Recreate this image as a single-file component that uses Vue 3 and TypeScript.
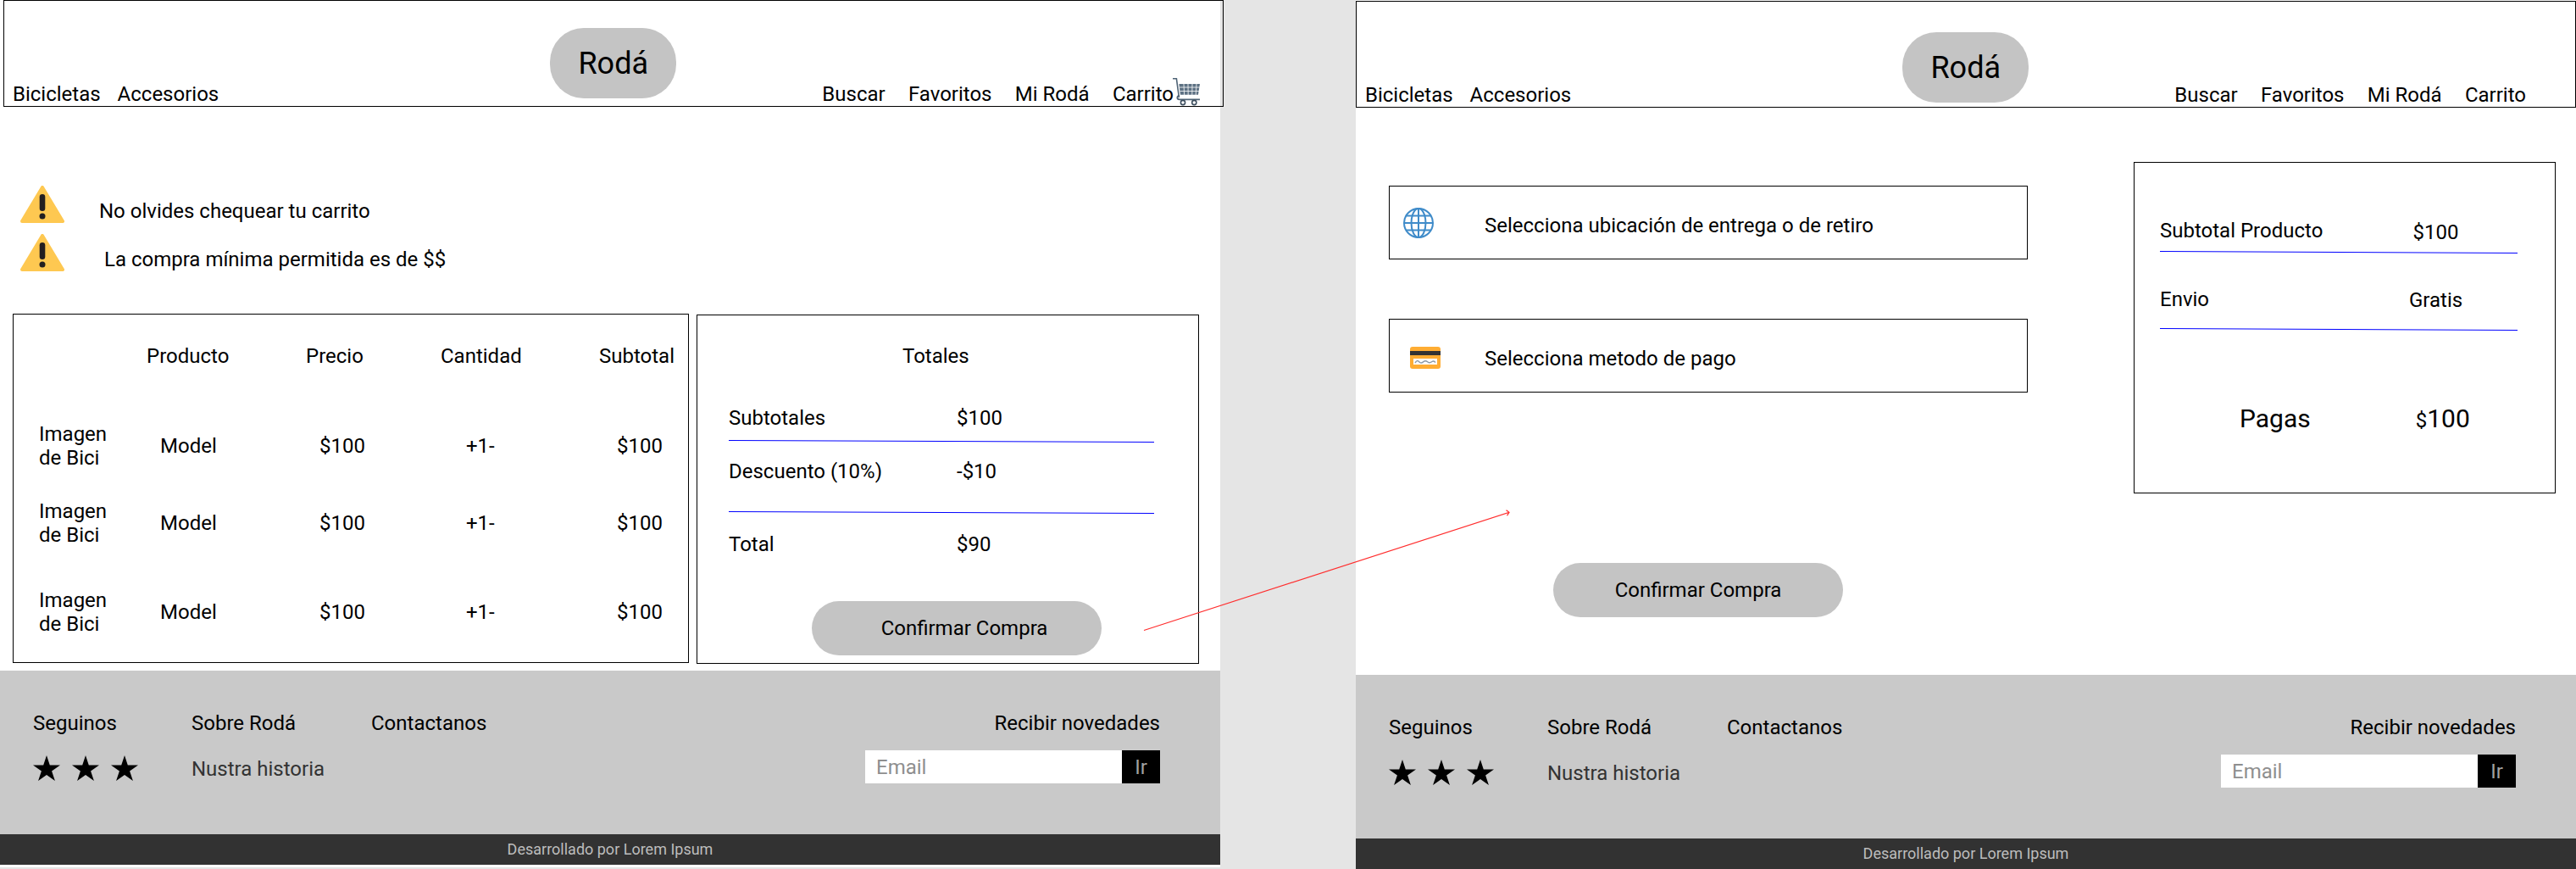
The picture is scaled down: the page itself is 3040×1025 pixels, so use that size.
<script setup lang="ts">
import { ref } from 'vue'

type FrameId = 'cart' | 'checkout'

const frames: FrameId[] = ['cart', 'checkout']
const navLeft = ['Bicicletas', 'Accesorios']
const navRight = ['Buscar', 'Favoritos', 'Mi Rodá', 'Carrito']
const headers = ['Producto', 'Precio', 'Cantidad', 'Subtotal']
const alerts = ['No olvides chequear tu carrito', 'La compra mínima permitida es de $$']
const products = ref([
  { name: 'Model', price: '$100', qty: '+1-', subtotal: '$100' },
  { name: 'Model', price: '$100', qty: '+1-', subtotal: '$100' },
  { name: 'Model', price: '$100', qty: '+1-', subtotal: '$100' },
])
const email = ref('')
const starPoints = '16,0 19.8,11.5 32,11.5 22.1,18.6 25.9,30 16,22.9 6.1,30 9.9,18.6 0,11.5 12.2,11.5'
</script>

<template>
  <div class="page">
    <section v-for="frame in frames" :key="frame" class="frame" :class="`frame--${frame}`">
      <header class="topbar">
        <nav class="nav">
          <a v-for="item in navLeft" :key="item">{{ item }}</a>
        </nav>
        <div class="logo">Rodá</div>
        <nav class="nav nav--right">
          <a v-for="item in navRight" :key="item">{{ item }}</a>
        </nav>
        <svg v-if="frame === 'cart'" class="cart-icon" width="32" height="33" viewBox="0 0 32 33">
          <path d="M0 .8h4.4L7.4 23" fill="none" stroke="#4f6476" stroke-width="1.6" />
          <path d="M7.4 7H32l-2 12.8H9z" fill="#5d7183" />
          <path d="M8 11h24M8.500 15.500h23M13 7l.6 13M18 7l.2 13M23 7l-.2 13M28 7l-.8 13" stroke="#fff" stroke-width=".8" />
          <path d="M8 20.500c-3.500 1-3.500 4.500 0 4.800h24" fill="none" stroke="#4f6476" stroke-width="1.800" />
          <circle cx="12" cy="29" r="2.600" fill="#fff" stroke="#3f5060" stroke-width="1.600" />
          <circle cx="25.300" cy="29" r="2.600" fill="#fff" stroke="#3f5060" stroke-width="1.600" />
        </svg>
      </header>

      <main v-if="frame === 'cart'" class="content">
        <div class="alerts">
          <div v-for="(alert, i) in alerts" :key="alert" class="alert">
            <svg width="52" height="44" viewBox="0 0 52 44">
              <polygon points="26,2 50,42 2,42" fill="#fec851" stroke="#fec851" stroke-width="4" stroke-linejoin="round" />
              <rect x="22.700" y="10" width="6.600" height="20" rx="3.300" fill="#231f20" />
              <circle cx="26" cy="36" r="3.500" fill="#231f20" />
            </svg>
            <span class="alert-text" :class="{ 'alert-text--wide': i === 1 }">{{ alert }}</span>
          </div>
        </div>

        <div class="cart-row">
          <div class="products">
            <div class="products-head">
              <span v-for="h in headers" :key="h">{{ h }}</span>
            </div>
            <div v-for="(p, i) in products" :key="i" class="product">
              <span class="thumb">Imagen<br />de Bici</span>
              <span>{{ p.name }}</span>
              <span>{{ p.price }}</span>
              <span>{{ p.qty }}</span>
              <span>{{ p.subtotal }}</span>
            </div>
          </div>

          <aside class="totals">
            <h2 class="totals-title">Totales</h2>
            <div class="totals-row totals-row--first"><span>Subtotales</span><span>$100</span></div>
            <svg class="rule rule--first" width="502" height="3" viewBox="0 0 502 3"><line x1="0" y1=".5" x2="502" y2="2.500" /></svg>
            <div class="totals-row totals-row--discount"><span>Descuento (10%)</span><span>-$10</span></div>
            <svg class="rule rule--second" width="502" height="3" viewBox="0 0 502 3"><line x1="0" y1=".5" x2="502" y2="2.500" /></svg>
            <div class="totals-row totals-row--total"><span>Total</span><span>$90</span></div>
            <button class="confirm confirm--totals" type="button">Confirmar Compra</button>
          </aside>
        </div>
      </main>

      <main v-else class="content content--checkout">
        <div class="steps">
          <div class="step">
            <svg class="globe" width="36" height="36" viewBox="0 0 36 36" fill="none" stroke="#3f8bc9" stroke-width="2">
              <circle cx="18" cy="18" r="17" />
              <ellipse cx="18" cy="18" rx="8.500" ry="17" />
              <path d="M18 1v34M1 18h34M4 9.500h28M4 26.500h28" />
            </svg>
            <span class="step-text">Selecciona ubicación de entrega o de retiro</span>
          </div>
          <div class="step step--pay">
            <svg class="credit" width="36" height="26" viewBox="0 0 36 26">
              <rect width="36" height="26" rx="3" fill="#ffad33" />
              <rect y="5" width="36" height="5" fill="#333" />
              <rect x="4" y="14" width="28" height="7" fill="#fff" />
              <path d="M6 19c2-3 3-3 5-1s3 1 5-.5 3-1 5 .5 3 1 5-.5 3 0 4 1" fill="none" stroke="#8c99a5" stroke-width="1.500" />
            </svg>
            <span class="step-text">Selecciona metodo de pago</span>
          </div>
          <button class="confirm confirm--steps" type="button">Confirmar Compra</button>
        </div>

        <aside class="summary">
          <div class="summary-row"><span>Subtotal Producto</span><span class="summary-value summary-value--low">$100</span></div>
          <svg class="rule rule--summary" width="422" height="3" viewBox="0 0 422 3"><line x1="0" y1=".5" x2="422" y2="2.500" /></svg>
          <div class="summary-row summary-row--ship"><span>Envio</span><span class="summary-value">Gratis</span></div>
          <svg class="rule rule--ship" width="422" height="3" viewBox="0 0 422 3"><line x1="0" y1=".5" x2="422" y2="2.500" /></svg>
          <div class="pay-row">
            <span>Pagas</span>
            <span><small>$</small>100</span>
          </div>
        </aside>
      </main>

      <footer class="footer">
        <div class="footer-main">
          <div class="footer-col footer-col--social">
            <span>Seguinos</span>
            <div class="stars">
              <svg v-for="n in 3" :key="n" width="32" height="30" viewBox="0 0 32 30"><polygon :points="starPoints" /></svg>
            </div>
          </div>
          <div class="footer-col footer-col--about">
            <span>Sobre Rodá</span>
            <span class="story">Nustra historia</span>
          </div>
          <div class="footer-col">
            <span>Contactanos</span>
          </div>
          <div class="newsletter">
            <span>Recibir novedades</span>
            <form class="subscribe" @submit.prevent>
              <input v-model="email" type="text" placeholder="Email" />
              <button type="submit">Ir</button>
            </form>
          </div>
        </div>
        <div class="credits">Desarrollado por Lorem Ipsum</div>
      </footer>
    </section>

    <svg class="flow-arrow" width="3040" height="1025" viewBox="0 0 3040 1025" fill="none" stroke="#ff2d2d" stroke-width="1.2">
      <path d="M1350 743.500L1781 604.300M1777.500 601.700L1781 604.300L1778.500 608.300" />
    </svg>
  </div>
</template>

<style scoped>
.page {
  position: relative;
  display: flex;
  align-items: flex-start;
  gap: 160px;
  width: 3040px;
  height: 1025px;
  overflow: hidden;
  font-family: Roboto, "Liberation Sans", sans-serif;
  font-size: 24px;
  line-height: 28px;
  color: #000;
}

.frame {
  display: flex;
  flex-direction: column;
  flex: none;
  width: 1440px;
  background: #fff;
}

.frame--cart {
  height: 1023px;
  padding-bottom: 3px;
  box-sizing: border-box;
}

.frame--checkout {
  height: 1025px;
}

.topbar {
  position: relative;
  display: flex;
  align-items: flex-end;
  flex: none;
  box-sizing: border-box;
  width: 1440px;
  height: 126px;
  padding: 0 58px 0 10px;
  border: 1px solid #000;
}

.frame--cart .topbar {
  margin-left: 4px;
}

.frame--checkout .topbar {
  margin-top: 1px;
}

.nav {
  display: flex;
  gap: 20px;
}

.nav--right {
  gap: 27.3px;
  margin-left: auto;
}

.logo {
  align-self: flex-start;
  display: flex;
  align-items: center;
  justify-content: center;
  box-sizing: border-box;
  width: 149px;
  height: 83px;
  margin-top: 32px;
  margin-left: 391px;
  border-radius: 40px;
  background: #c4c4c4;
  font-size: 36px;
  line-height: 42px;
}

.frame--checkout .logo {
  margin-top: 36px;
}

.cart-icon {
  position: absolute;
  left: 1379px;
  top: 91px;
}

.content {
  flex: 1;
  min-height: 0;
}

.alerts {
  display: flex;
  flex-direction: column;
  gap: 13px;
  padding: 93px 0 0 24px;
}

.alert {
  display: flex;
  align-items: flex-end;
}

.alert-text {
  margin-left: 41px;
}

.alert-text--wide {
  margin-left: 47px;
}

.cart-row {
  display: flex;
  align-items: flex-start;
  gap: 9px;
  margin-top: 50px;
  padding-left: 15px;
}

.products {
  box-sizing: border-box;
  width: 798px;
  height: 412px;
  padding-top: 35px;
  border: 1px solid #000;
}

.products-head {
  display: grid;
  grid-template-columns: 188px 159px 187px auto;
  padding-left: 157px;
  margin-bottom: 64px;
}

.product {
  display: grid;
  grid-template-columns: 143px 188px 173px 178px auto;
  align-items: center;
  padding-left: 30px;
}

.product:nth-child(3) {
  margin-top: 35px;
}

.product:nth-child(4) {
  margin-top: 49px;
}

.totals {
  box-sizing: border-box;
  width: 593px;
  height: 412px;
  margin-top: 1px;
  padding: 34px 0 0 37px;
  border: 1px solid #000;
}

.totals-title {
  margin: 0;
  padding-left: 205px;
  font-size: 24px;
  font-weight: 400;
}

.totals-row {
  display: grid;
  grid-template-columns: 269px auto;
}

.totals-row--first {
  margin-top: 45px;
}

.totals-row--discount {
  margin-top: 20px;
}

.totals-row--total {
  margin-top: 22px;
}

.rule {
  display: block;
  stroke: #0000ff;
  stroke-width: 1;
}

.rule--first {
  margin-top: 12px;
}

.rule--second {
  margin-top: 33px;
}

.confirm {
  display: block;
  box-sizing: border-box;
  width: 342px;
  height: 64px;
  padding: 0;
  border: 0;
  border-radius: 32px;
  background: #c4c4c4;
  color: #000;
  font: inherit;
}

.confirm--totals {
  margin: 53px 0 0 98px;
  padding-left: 18px;
}

.confirm--steps {
  margin: 201px 0 0 194px;
}

.content--checkout {
  display: flex;
  align-items: flex-start;
}

.steps {
  flex: none;
  width: 754px;
  margin: 92px 0 0 39px;
}

.step {
  display: flex;
  align-items: center;
  box-sizing: border-box;
  height: 87px;
  padding-left: 16px;
  border: 1px solid #000;
}

.step--pay {
  margin-top: 70px;
}

.globe {
  flex: none;
}

.credit {
  flex: none;
  margin: 5px 0 0 8px;
}

.step-text {
  margin: 7px 0 0 60px;
}

.step--pay .step-text {
  margin-left: 52px;
}

.summary {
  flex: none;
  box-sizing: border-box;
  width: 498px;
  height: 391px;
  margin: 64px 0 0 125px;
  padding: 66px 0 0 30px;
  border: 1px solid #000;
}

.summary-row {
  display: grid;
  grid-template-columns: 294px 63px;
}

.summary-value {
  margin-top: 1px;
  text-align: center;
  white-space: nowrap;
}

.summary-value--low {
  margin-top: 2px;
}

.rule--summary {
  margin-top: 8px;
}

.summary-row--ship {
  margin-top: 40px;
}

.rule--ship {
  margin-top: 19px;
}

.pay-row {
  display: flex;
  align-items: baseline;
  gap: 124px;
  margin: 86px 0 0 94px;
  font-size: 30px;
  line-height: 35px;
}

.pay-row small {
  font-size: 24px;
}

.footer {
  flex: none;
  height: 229px;
}

.footer-main {
  display: flex;
  box-sizing: border-box;
  height: 193px;
  padding: 48px 71px 0 39px;
  background: #c9c9c9;
}

.footer-col {
  display: flex;
  flex-direction: column;
}

.footer-col--social {
  width: 187px;
}

.footer-col--about {
  width: 212px;
}

.stars {
  display: flex;
  gap: 14px;
  margin-top: 24px;
}

.stars svg {
  fill: #000;
}

.story {
  margin-top: 26px;
  color: #333;
}

.newsletter {
  display: flex;
  flex-direction: column;
  align-items: flex-end;
  margin-left: auto;
}

.subscribe {
  display: flex;
  height: 39px;
  margin-top: 18px;
}

.subscribe input {
  box-sizing: border-box;
  width: 303px;
  height: 39px;
  padding: 0 13px;
  border: 0;
  border-radius: 0;
  outline: 0;
  background: #fff;
  font: inherit;
}

.subscribe input::placeholder {
  color: #8f8f8f;
  opacity: 1;
}

.subscribe button {
  width: 45px;
  height: 39px;
  padding: 0;
  border: 0;
  background: #000;
  color: #a0a0a0;
  font: inherit;
}

.credits {
  height: 36px;
  background: #323232;
  color: #bdbdbd;
  font-size: 18px;
  line-height: 36px;
  text-align: center;
}

.flow-arrow {
  position: absolute;
  left: 0;
  top: 0;
  pointer-events: none;
}
</style>

<style>
html,
body {
  margin: 0;
  background: #e5e5e5;
}
</style>
